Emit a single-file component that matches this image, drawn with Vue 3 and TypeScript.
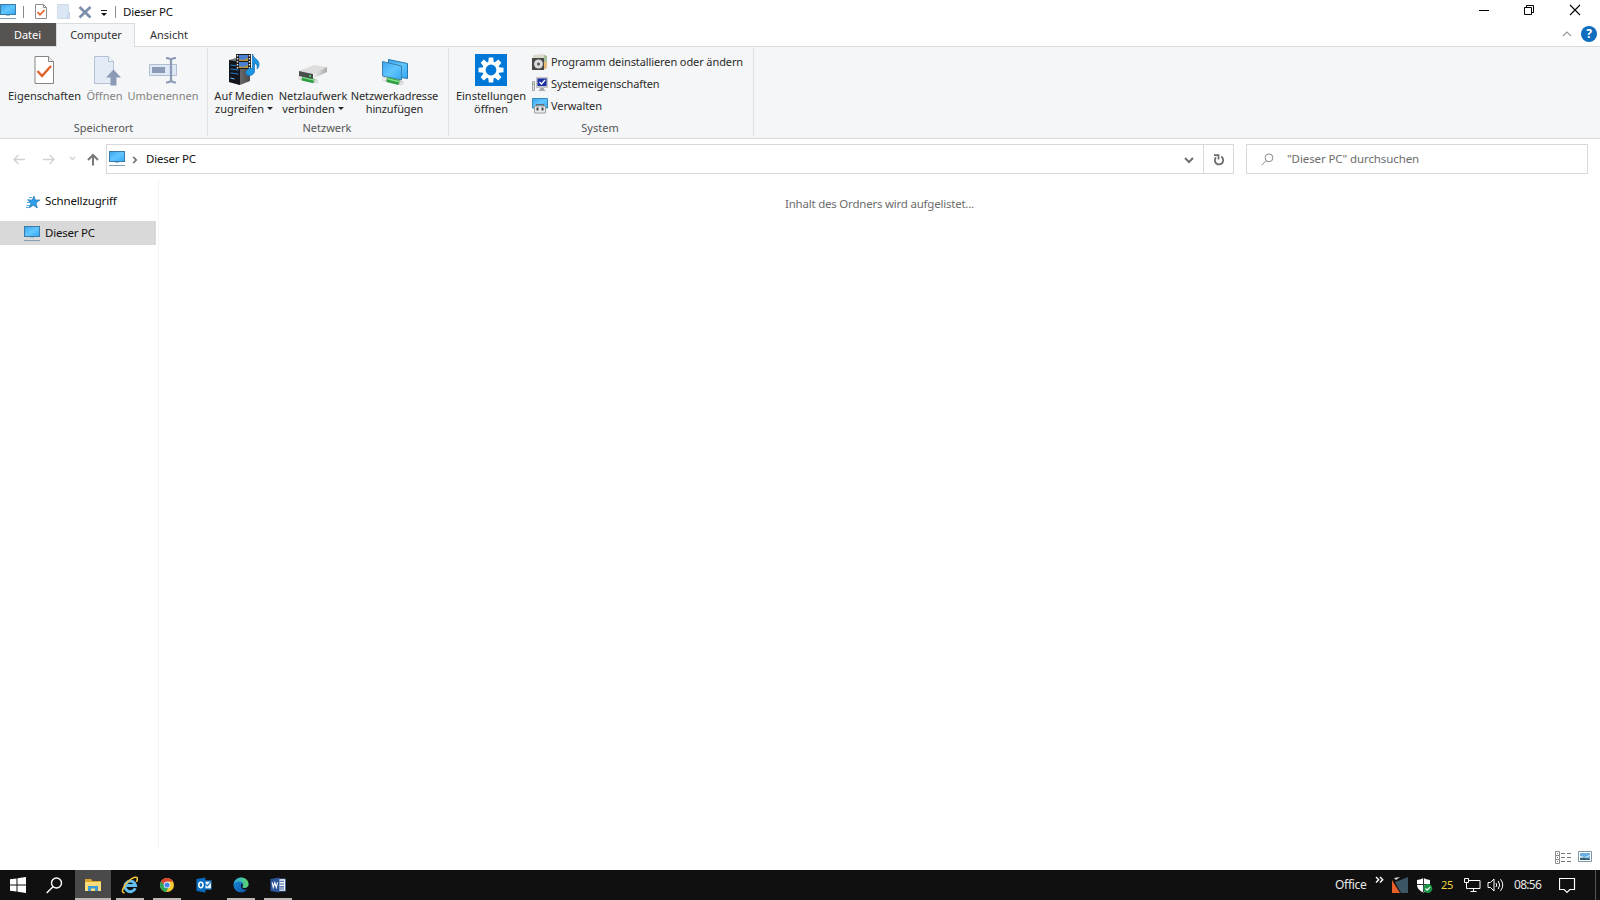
<script setup lang="ts">
import { ref } from 'vue'

type TabId = 'computer' | 'ansicht'
const activeTab = ref<TabId>('computer')
const search = ref('')
const apps = [
  { id: 'explorer', label: 'Explorer', state: 'active' },
  { id: 'ie', label: 'Internet Explorer', state: 'open' },
  { id: 'chrome', label: 'Chrome', state: 'open' },
  { id: 'outlook', label: 'Outlook', state: '' },
  { id: 'edge', label: 'Edge', state: 'open' },
  { id: 'word', label: 'Word', state: 'open' },
]
</script>

<template>
  <div class="desktop">
    <svg class="defs" width="0" height="0" aria-hidden="true">
      <defs>
        <linearGradient id="screen" x1="0" y1="0" x2="1" y2="1">
          <stop offset="0" stop-color="#3aa6ef" /><stop offset=".5" stop-color="#62c6ff" /><stop offset="1" stop-color="#35a8f5" />
        </linearGradient>
        <linearGradient id="steel" x1="0" y1="0" x2="1" y2="0">
          <stop offset="0" stop-color="#f2f2f2" /><stop offset="1" stop-color="#a9a9a9" />
        </linearGradient>
        <linearGradient id="tower" x1="0" y1="0" x2="1" y2="0">
          <stop offset="0" stop-color="#8a8a8a" /><stop offset="1" stop-color="#4a4a4a" />
        </linearGradient>
        <linearGradient id="edgeBlue" x1="0" y1="0" x2="1" y2="1">
          <stop offset="0" stop-color="#1b8fe0" /><stop offset="1" stop-color="#0b4fa0" />
        </linearGradient>
        <linearGradient id="edgeGreen" x1="0" y1="0" x2="1" y2="0">
          <stop offset="0" stop-color="#27a9e8" /><stop offset="1" stop-color="#5fd668" />
        </linearGradient>
        <symbol id="pc" viewBox="0 0 16 16">
          <rect x=".5" y=".5" width="15" height="10" fill="url(#screen)" stroke="#3c7ba6" />
          <path d="M6 11h4v1H6z" fill="#9cc3dc" /><path d="M0 14.500h16" stroke="#84a0b2" stroke-width="1" />
        </symbol>
        <symbol id="pipe" viewBox="0 0 24 10">
          <path d="M3 3l17 4" stroke="#b9bdb9" stroke-width="4" stroke-linecap="round" />
          <path d="M5.500 3.500l12 3" stroke="#2f9e42" stroke-width="5" /><path d="M6 2.700l12 3" stroke="#7fe08a" stroke-width="1.500" />
          <circle cx="3" cy="3" r="1.800" fill="#eceeec" /><circle cx="20" cy="7.300" r="1.800" fill="#dfe3df" />
        </symbol>
      </defs>
    </svg>

    <header class="titlebar">
      <svg class="app-icon" width="16" height="16"><use href="#pc" /></svg>
      <i class="sep sep-a"></i>
      <svg class="q-check" width="14" height="17" viewBox="0 0 14 17">
        <path d="M1.500 1.500h8l3 3v11h-11z" fill="#fff" stroke="#8e8e8e" /><path d="M9.500 1.500v3h3" fill="none" stroke="#8e8e8e" /><path d="M3.500 9l2.500 2.800L10.500 7" fill="none" stroke="#e2602a" stroke-width="1.700" />
      </svg>
      <svg class="q-new" width="14" height="17" viewBox="0 0 14 17">
        <path d="M.5 1.500h11v14H.5z" fill="#dbe6f4" stroke="#d0dcec" /><path d="M12.500 9.500v6h-2v-4z" fill="#dbe6f4" stroke="#c3d1e4" />
      </svg>
      <svg class="q-del" width="14" height="14" viewBox="0 0 14 14"><path d="M1.500 2l11 10.500M12.500 2l-11 10.500" stroke="#7f90ac" stroke-width="2.800" /></svg>
      <svg class="q-more" width="8" height="8" viewBox="0 0 8 8"><path d="M1 1.500h6" stroke="#111" /><path d="M1 4h6L4 7z" fill="#111" /></svg>
      <i class="sep sep-b"></i>
      <h1 class="title">Dieser PC</h1>
      <div class="win-buttons">
        <svg width="45" height="22" viewBox="0 0 45 22"><path d="M17 10.500h10" stroke="#000" /></svg>
        <svg width="45" height="22" viewBox="0 0 45 22"><path d="M17.500 7.500h7v7h-7zM19.500 7V5.500h7v7H25" fill="none" stroke="#000" /></svg>
        <svg width="46" height="22" viewBox="0 0 46 22"><path d="M18 5l10 10M28 5l-10 10" stroke="#000" stroke-width="1.100" /></svg>
      </div>
    </header>

    <nav class="tabs">
      <button class="tab file">Datei</button>
      <button class="tab computer" :class="{ active: activeTab === 'computer' }" @click="activeTab = 'computer'">Computer</button>
      <button class="tab view" :class="{ active: activeTab === 'ansicht' }" @click="activeTab = 'ansicht'">Ansicht</button>
      <svg class="collapse" width="10" height="8" viewBox="0 0 10 8"><path d="M1 6l4-4 4 4" fill="none" stroke="#999" stroke-width="1.200" /></svg>
      <span class="help">?</span>
    </nav>

    <section class="ribbon">
      <div class="group g-place">
        <div class="tools">
          <button class="tool w79">
            <svg width="32" height="32" viewBox="0 0 32 32"><path d="M6 2.500h13.500l5 5v22H6z" fill="#fff" stroke="#858585" /><path d="M19.500 2.500v5h5" fill="#eee" stroke="#858585" /><path d="M8.500 17l4.500 5 9-10" fill="none" stroke="#e2602a" stroke-width="2.400" /></svg>
            <span>Eigenschaften</span>
          </button>
          <button class="tool w41 disabled">
            <svg width="32" height="32" viewBox="0 0 32 32"><path d="M5.500 2.500h14l5 5v22h-19z" fill="#e3ebf6" stroke="#b4c1d5" /><path d="M19.500 2.500v5h5" fill="#f4f7fb" stroke="#b4c1d5" /><path d="M24.500 15.500l7.500 8h-4.500v8h-6v-8H17z" fill="#8b9bb5" /></svg>
            <span>Öffnen</span>
          </button>
          <button class="tool w76 disabled">
            <svg width="32" height="32" viewBox="0 0 32 32"><path d="M2.500 10.500h27v11h-27z" fill="#dfe8f5" stroke="#b0bfd4" /><path d="M5 13h13v6H5z" fill="#8b9bb5" /><path d="M19 4q5 0 5 3 0-3 5-3M24 6v21M19 28.500q5 0 5-3 0 3 5 3" fill="none" stroke="#8b9bb5" stroke-width="2.200" /></svg>
            <span>Umbenennen</span>
          </button>
        </div>
        <div class="caption">Speicherort</div>
      </div>

      <div class="group g-net">
        <div class="tools">
          <button class="tool w65">
            <svg width="32" height="32" viewBox="0 0 32 32">
              <path d="M1 6l10-3 11 2v22l-10 4-11-3z" fill="url(#tower)" /><path d="M1 6l11 2v23L1 28z" fill="#12161c" /><path d="M2.500 11l8 1M2.500 15l8 1M2.500 19l8 1" stroke="#2479c6" stroke-width="1.200" /><path d="M2.500 24l4 1" stroke="#6cc5ff" />
              <path d="M8 0h15v15H8z" fill="#1d1d1d" /><path d="M11 1h9v6h-9z" fill="#4a7fd0" /><path d="M11 8h9v6h-9z" fill="#4a7fd0" /><path d="M11 5l4 1 5-2v3h-9zM11 12l4 1 5-2v3h-9z" fill="#b5933f" /><path d="M9.500 1v14M21.500 1v14" stroke="#eee" stroke-width="1.400" stroke-dasharray="1.500 1.500" />
              <path d="M24.500 0c1 5 7 5 6.500 11-.2 2-1 3-2 4 1-4-1-5-2.500-6v8c0 3-3 5-6 4.500S17 18 19 16s3.500-2 5.500-1.500z" fill="#1d94e0" stroke="#0d6fb8" stroke-width=".7" />
            </svg>
            <span>Auf Medien<br />zugreifen <b class="caret"></b></span>
          </button>
          <button class="tool w74">
            <svg width="32" height="32" viewBox="0 0 32 32">
              <use href="#pipe" x="0" y="20" width="23" height="11" />
              <path d="M2 17l15-6 13 2-13 7z" fill="#dedede" /><path d="M2 17l14 3v5L2 22z" fill="#4a4f4e" /><path d="M16 20l14-7v5l-14 7z" fill="url(#steel)" /><circle cx="13" cy="22" r="1" fill="#46e45b" />
            </svg>
            <span>Netzlaufwerk<br />verbinden <b class="caret"></b></span>
          </button>
          <button class="tool w92 tight">
            <svg width="32" height="32" viewBox="0 0 32 32">
              <path d="M9.500 5.500l19 4v15l-19-3z" fill="url(#screen)" stroke="#2779ad" /><path d="M3.500 7.500l19 4.500v14l-19-4z" fill="url(#screen)" stroke="#3c81ab" />
              <use href="#pipe" x="2" y="22" width="25" height="10" />
            </svg>
            <span>Netzwerkadresse<br />hinzufügen</span>
          </button>
        </div>
        <div class="caption">Netzwerk</div>
      </div>

      <div class="group g-sys">
        <div class="tools">
          <button class="tool w77">
            <svg width="32" height="32" viewBox="0 0 32 32">
              <path d="M0 0h32v32H0z" fill="#0078d7" />
              <g fill="#fff"><path id="cog" d="M13.800 3.500h4.400l.6 5h-5.600zM13.200 23.500h5.600l-.6 5h-4.400z" /><use href="#cog" transform="rotate(45 16 16)" /><use href="#cog" transform="rotate(90 16 16)" /><use href="#cog" transform="rotate(135 16 16)" /></g>
              <circle cx="16" cy="16" r="7" fill="none" stroke="#fff" stroke-width="3.200" />
            </svg>
            <span>Einstellungen<br />öffnen</span>
          </button>
          <ul class="rows">
            <li>
              <svg width="16" height="16" viewBox="0 0 16 16"><path d="M1 1l9-1 4 1v14l-3 1H1z" fill="#dcd9cd" /><path d="M12 1l3 1v6l-3 1z" fill="#a9bf9a" /><path d="M12 8h3v6l-3 1z" fill="#e8b878" /><path d="M0 4h12v12H0z" fill="#484848" /><circle cx="6.500" cy="10" r="4.500" fill="#dadada" /><circle cx="6.500" cy="10" r="1.500" fill="#555" /></svg>
              <span>Programm deinstallieren oder ändern</span>
            </li>
            <li>
              <svg width="16" height="16" viewBox="0 0 16 16"><path d="M.5 5.500h2v9h-2z" fill="#e4e4e4" stroke="#a2a2a2" /><path d="M.5 8h2" stroke="#6cbf55" /><path d="M4 1h12v11H4z" fill="#c2c4c8" /><path d="M5.500 2.500h9v7.500h-9z" fill="#1d2fa5" /><path d="M7.500 6l2 2L13 4" fill="none" stroke="#fff" stroke-width="1.300" /><path d="M8 12h4v1.500l2 1.500H6l2-1.500z" fill="#a5a8ad" /></svg>
              <span>Systemeigenschaften</span>
            </li>
            <li>
              <svg width="16" height="16" viewBox="0 0 16 16"><path d="M.5.500h15v9.500H.5z" fill="url(#screen)" stroke="#3887b9" /><path d="M4.500 8V6.500h7V8" fill="none" stroke="#6a6a6a" stroke-width="1.200" /><path d="M2.500 8h11v7h-11z" fill="#ebebeb" stroke="#8c8c8c" stroke-width=".8" /><path d="M4.500 9.500h2v3h-2zM9.500 9.500h2v3h-2z" fill="#444" /></svg>
              <span>Verwalten</span>
            </li>
          </ul>
        </div>
        <div class="caption">System</div>
      </div>
    </section>

    <div class="address-row">
      <svg class="nav-icons" width="106" height="30" viewBox="0 0 106 30" fill="none">
        <path d="M25 15.500H14M18.500 11L14 15.500l4.500 4.500M43 15.500h11M49.500 11l4.500 4.500-4.500 4.500" stroke="#d2d2d2" stroke-width="1.400" />
        <path d="M70 13l2.500 2.500L75 13" stroke="#cfcfcf" stroke-width="1.300" />
        <path d="M93 21.500V11M88 16l5-5 5 5" stroke="#777" stroke-width="2" />
      </svg>
      <div class="path-box">
        <svg class="path-pc" width="16" height="16"><use href="#pc" /></svg>
        <svg class="crumb" width="6" height="8" viewBox="0 0 6 8"><path d="M1.200 1l3 3-3 3" fill="none" stroke="#666" stroke-width="1.600" /></svg>
        <span class="ui path-text">Dieser PC</span>
        <svg class="drop" width="10" height="8" viewBox="0 0 10 8"><path d="M1 2l4 4 4-4" fill="none" stroke="#707070" stroke-width="2" /></svg>
        <div class="reload">
          <svg width="12" height="13" viewBox="0 0 12 13"><path d="M3 4.300A4.200 4.200 0 1 0 8.200 3.600" fill="none" stroke="#6c6c6c" stroke-width="1.800" /><path d="M1 2.200h4.500V6.500" fill="none" stroke="#6c6c6c" stroke-width="1.700" /></svg>
        </div>
      </div>
      <label class="search-box">
        <svg width="13" height="13" viewBox="0 0 13 13" fill="none" stroke="#8b8b8b"><circle cx="8" cy="4.800" r="3.900" /><path d="M5.200 7.600L.6 12.200" /></svg>
        <input v-model="search" class="ui" placeholder="&quot;Dieser PC&quot; durchsuchen" />
      </label>
    </div>

    <main class="body">
      <aside class="sidebar">
        <div class="side-item">
          <svg width="16" height="16" viewBox="0 0 16 16"><path d="M10 2l1.200 3.900 4.600.2-3.800 2.800 1.300 5.100-4-2.800L5 14l1.800-4.800L4 6.300l4.200-.3z" fill="#2f9ee8" stroke="#2474b4" stroke-width=".7" /><path d="M5 3.500h3M3.500 5.500h2M3 8.500h3M2.500 11.500h3M2 13.500h2.500" stroke="#4ba9e2" /></svg>
          <span class="ui quick">Schnellzugriff</span>
        </div>
        <div class="side-item selected">
          <svg width="16" height="16"><use href="#pc" /></svg>
          <span class="ui">Dieser PC</span>
        </div>
      </aside>
      <div class="content"><p class="ui">Inhalt des Ordners wird aufgelistet...</p></div>
    </main>

    <footer class="status">
      <svg width="17" height="14" viewBox="0 0 17 14"><path d="M.5.500h4v12h-4zM.5 4.500h4M.5 8.500h4" fill="none" stroke="#8d8d8d" /><path d="M2 2.500h1M2 6.500h1M2 10.500h1M6 2.500h4M12 2.500h4M6 6.500h4M12 6.500h4M6 10.500h4M12 10.500h4" stroke="#777" /></svg>
      <svg width="15" height="12" viewBox="0 0 15 12"><path d="M.5.500h13v10H.5z" fill="#fff" stroke="#8293a0" /><path d="M2 2h10v7H2z" fill="#6caee6" /><path d="M2 5l5 1 5-2v1l-5 2-5 1z" fill="#d8edf9" /><path d="M2 7l4-.5 6 1.500v1H2z" fill="#315f74" /></svg>
    </footer>

    <div class="taskbar">
      <div class="task start"><svg width="16" height="16" viewBox="0 0 16 16"><path d="M0 2.300l6.500-.9v6.100H0zM7.500 1.200L16 0v7.500H7.500zM0 8.500h6.500v6.100L0 13.700zM7.500 8.500H16V16l-8.500-1.200z" fill="#fff" /></svg></div>
      <div class="task find"><svg width="17" height="17" viewBox="0 0 17 17" fill="none" stroke="#fff" stroke-width="1.400"><circle cx="10.500" cy="6" r="5" /><path d="M7 9.700L.7 16" /></svg></div>
      <div v-for="app in apps" :key="app.id" class="task app" :class="app.state" :title="app.label">
        <svg v-if="app.id === 'explorer'" width="16" height="16" viewBox="0 0 16 16"><path d="M0 2h6l1.500 2H16v10H0z" fill="#dea32a" /><path d="M0 5h16v9H0z" fill="#fbdc7c" /><path d="M3 14V9h10v5h-3v-2.500H6V14z" fill="#3a9bd6" /></svg>
        <svg v-else-if="app.id === 'ie'" width="18" height="18" viewBox="0 0 18 18" fill="none"><path d="M14.300 12.300A5.300 5.300 0 1 1 14.600 9.500H5" stroke="#62bdf0" stroke-width="2.900" /><path d="M3.500 16.500C-.5 18 2 10 7 5.500S17-.5 16.200 3.500c0 .9-.4 1.700-.8 2.500" stroke="#f0c33a" stroke-width="1.600" /></svg>
        <svg v-else-if="app.id === 'chrome'" width="16" height="16" viewBox="0 0 16 16"><circle cx="8" cy="8" r="7" fill="#f7c92e" /><path d="M1.900 4.500A7 7 0 0 0 7 15l3.500-6z" fill="#2aa457" /><path d="M1.900 4.500A7 7 0 0 1 14.100 4.500H8L6 9z" fill="#dc4437" /><circle cx="8" cy="8" r="3.300" fill="#fff" /><circle cx="8" cy="8" r="2.600" fill="#4384ea" /></svg>
        <svg v-else-if="app.id === 'outlook'" width="16" height="16" viewBox="0 0 17 17"><path d="M8 3.500h8.500v10H8z" fill="#1774c4" /><path d="M9 5h7v7H9z" fill="#e8f3fc" /><path d="M9.500 7l2.500 2.500L16 5" fill="none" stroke="#1774c4" stroke-width="1.300" /><path d="M.5 2L10 .5v16L.5 15z" fill="#0a6cc0" /><ellipse cx="5.200" cy="8.500" rx="2.200" ry="2.900" fill="none" stroke="#fff" stroke-width="1.600" /></svg>
        <svg v-else-if="app.id === 'edge'" width="16" height="16" viewBox="0 0 17 17"><circle cx="8.500" cy="8.500" r="8" fill="url(#edgeBlue)" /><path d="M.6 8.200C1 3.500 4.500.5 8.700.5c4.800 0 7.800 3.500 7.800 7 0 3-2 4.200-4.200 4.200-1.700 0-2.500-.8-2.500-1.400 0-.5.900-.9.900-2.300 0-1.800-1.700-3.200-4.200-3.200-2.900 0-5.200 1.500-5.900 3.400z" fill="url(#edgeGreen)" /><path d="M10.700 8c0 1.400-.9 1.800-.9 2.300 0 .6.800 1.400 2.500 1.400 1.600 0 3-.7 3.700-2l1 2.300c-1.500 1.800-4.500 2-6.500.8C8.500 11.800 8 9.500 9 7.500z" fill="#101010" /></svg>
        <svg v-else width="16" height="16" viewBox="0 0 17 17"><path d="M8 2h8.500v13H8z" fill="#fff" stroke="#2b579a" stroke-width=".7" /><path d="M10 4.500h5M10 7.500h5M10 10.500h5M10 12.800h5" stroke="#2b579a" stroke-width="1.200" /><path d="M.5 2L10 .5v16L.5 15z" fill="#2b579a" /><path d="M2.300 5.800l1.200 5.200 1.600-5 1.600 5L8 5.800" fill="none" stroke="#fff" stroke-width="1.200" /></svg>
      </div>
      <div class="tray">
        <span class="office">Office</span>
        <svg class="more" width="9" height="8" viewBox="0 0 9 8"><path d="M1 1l2.700 2.700L1 6.400M5 1l2.700 2.700L5 6.400" fill="none" stroke="#fff" stroke-width="1.400" /></svg>
        <svg class="t-app" width="16" height="16" viewBox="0 0 16 16"><path d="M0 3l3 5 5 8H0z" fill="#e85f2a" /><path d="M3 5Q9 3 16 0v16H9Q6 11 3 5z" fill="#3d5666" /><path d="M2 1l6-1-4 3z" fill="#dedede" /></svg>
        <svg class="t-shield" width="17" height="17" viewBox="0 0 17 17"><path d="M7.500 1Q10 2.700 14 3v4.500c0 4-3 6.500-6.500 8C4 14 1 11.500 1 7.500V3q4-.3 6.500-2z" fill="#fff" /><path d="M7.500 1v14M1 7.500h13" stroke="#333" /><circle cx="11.800" cy="11.500" r="4.500" fill="#189447" /><path d="M9.500 11.500l1.700 1.700 3-3.300" fill="none" stroke="#fff" stroke-width="1.200" /></svg>
        <span class="temp">25</span>
        <svg class="t-net" width="17" height="16" viewBox="0 0 17 16" fill="none" stroke="#fff"><path d="M5 3.500h11v8H4.500M9.500 12v2.500M6.500 14.500h6M.5 1.500h4v4h-4zM2.500 5.500v6h2" /></svg>
        <svg class="t-sound" width="17" height="14" viewBox="0 0 17 14" fill="none" stroke="#fff"><path d="M1 4.500h2.500L7 1v12L3.500 9.500H1zM9 5q1.500 2 0 4M11.200 3q3 4 0 8M13.500 1.200q4.500 5.800 0 11.600" /></svg>
        <time class="clock">08:56</time>
        <svg class="t-note" width="17" height="17" viewBox="0 0 17 17"><path d="M.5 1.500h15v11h-4.700L8 15.300 5.200 12.500H.5z" fill="none" stroke="#fff" stroke-width="1.200" /></svg>
        <i class="peek"></i>
      </div>
    </div>
  </div>
</template>

<style>
html, body { margin: 0; overflow: hidden; background: #fff; }
</style>

<style scoped>
* { box-sizing: border-box; }
.desktop { width: 1600px; height: 900px; display: flex; flex-direction: column; background: #fff; color: #111; font: 11.5px/16px "Noto Sans", "Open Sans", sans-serif; overflow: hidden; }
.defs { position: absolute; }
svg { display: block; flex: none; }
button { border: 0; padding: 0; background: none; font: inherit; color: inherit; }
.ui { font-size: 11.5px; letter-spacing: -.22px; white-space: nowrap; }
.quick { letter-spacing: -.15px; }

.titlebar { height: 23px; display: flex; align-items: center; flex: none; }
.app-icon { margin-top: 0; }
.sep { width: 1px; height: 12px; background: #8a8a8a; }
.sep-a { margin-left: 7px; }
.q-check { margin-left: 10px; }
.q-new { margin-left: 9px; }
.q-del { margin-left: 7px; }
.q-more { margin: 3px 0 0 8px; }
.sep-b { margin-left: 7px; }
.title { margin: 0 0 0 7px; font-size: 11.5px; font-weight: 400; letter-spacing: -.22px; }
.win-buttons { margin: 0 2px 0 auto; display: flex; align-self: flex-start; }

.tabs { height: 24px; display: flex; border-bottom: 1px solid #dadbdc; flex: none; font-size: 11px; }
.tab { height: 23px; color: #333; }
.file { width: 56px; background: #565351; color: #fff; padding-right: 1px; }
.computer { width: 79px; border: 1px solid transparent; border-bottom: 0; letter-spacing: -.08px; padding-left: 1px; }
.view { width: 68px; }
.tab.active { height: 24px; background: #f5f6f7; border: 1px solid #dadbdc; border-bottom: 0; padding-bottom: 1px; }
.collapse { margin: 7px 0 0 auto; }
.help { width: 16px; height: 16px; margin: 3px 3px 0 9px; border-radius: 50%; background: #0f6cbf; color: #fff; font-weight: 700; font-size: 12px; line-height: 16px; text-align: center; }

.ribbon { height: 92px; display: flex; background: #f5f6f7; border-bottom: 1px solid #d9dadc; flex: none; font-size: 11px; color: #2a2a2a; }
.group { height: 88px; margin-top: 1px; border-right: 1px solid #e0e1e2; display: flex; flex-direction: column; }
.g-place { width: 208px; padding-left: 5px; }
.g-net { width: 241px; padding-left: 3px; }
.g-sys { width: 305px; padding-left: 3px; }
.tools { display: flex; height: 73px; padding-top: 6px; }
.tool { display: flex; flex-direction: column; align-items: center; justify-content: flex-start; line-height: 13px; white-space: nowrap; }
.tool span { margin-top: 3px; }
.tight { letter-spacing: -.12px; padding-right: 1px; }
.disabled { color: #838383; }
.w79 { width: 79px; } .w41 { width: 41px; } .w76 { width: 76px; }
.w65 { width: 66px; } .w74 { width: 72px; } .w92 { width: 92px; } .w77 { width: 78px; }
.caret { display: inline-block; border: 3px solid transparent; border-top-color: #222; border-bottom: 0; vertical-align: 3px; }
.caption { text-align: center; line-height: 16px; color: #555; margin-top: 3px; }
.g-place .caption { margin-left: -5px; } .g-net .caption, .g-sys .caption { margin-left: -5px; }
.rows { list-style: none; margin: -3px 0 0 2px; padding: 0; letter-spacing: -.1px; }
.rows li { display: flex; align-items: center; height: 22px; gap: 3px; white-space: nowrap; }

.address-row { height: 41px; display: flex; padding-top: 5px; flex: none; }
.path-box { width: 1128px; height: 30px; border: 1px solid #d9d9d9; display: flex; align-items: center; }
.path-pc { margin: 0 0 0 2px; }
.crumb { margin: 1px 0 0 7px; }
.path-text { margin-left: 8px; }
.drop { margin: 1px 9px 0 auto; }
.reload { width: 30px; height: 28px; border-left: 1px solid #d9d9d9; display: flex; align-items: center; justify-content: center; }
.search-box { width: 342px; height: 30px; margin-left: 12px; border: 1px solid #d9d9d9; display: flex; align-items: center; padding-left: 14px; gap: 13px; }
.search-box input { border: 0; outline: 0; padding: 0 0 2px; width: 260px; font-family: inherit; color: #6d6d6d; letter-spacing: -.1px; }
.search-box input::placeholder { color: #6d6d6d; opacity: 1; }

.body { flex: 1; display: flex; min-height: 0; }
.sidebar { width: 159px; border-right: 1px solid #f4f4f4; padding-top: 9px; }
.side-item { width: 156px; height: 24px; display: flex; align-items: center; gap: 5px; padding-left: 24px; margin-bottom: 8px; }
.side-item svg { margin-top: 1px; }
.selected { background: #d9d9d9; }
.content { flex: 1; text-align: center; }
.content p { margin: 16px 0 0; color: #6d6d6d; }

.status { height: 21px; flex: none; display: flex; justify-content: flex-end; gap: 6px; padding: 2px 7px 0 0; }

.taskbar { height: 30px; flex: none; background: #101010; display: flex; color: #fff; }
.task { width: 37px; height: 30px; display: flex; align-items: center; justify-content: center; position: relative; }
.app { padding-right: 1px; }
.start { width: 36px; } .find { width: 39px; padding-right: 3px; }
.task.active { background: #4a4a4a; width: 36px; margin-right: 1px; padding-right: 0; }
.task.open::after, .task.active::after { content: ""; position: absolute; left: 4px; right: 5px; bottom: 0; height: 2px; background: #bcb8b5; }
.task.active::after { left: 0; right: 0; }
.tray { margin-left: auto; display: flex; align-items: center; font-size: 12px; color: #e8e8e8; }
.office { width: 33px; letter-spacing: -.3px; }
.more { margin: -11px 0 0 7px; }
.t-app { margin-left: 8px; }
.t-shield { margin-left: 8px; }
.temp { margin-left: 8px; width: 14px; color: #f1d33c; font-size: 11px; letter-spacing: -.4px; }
.t-net { margin-left: 9px; }
.t-sound { margin-left: 6px; }
.clock { margin-left: 10px; width: 29px; letter-spacing: -.7px; }
.t-note { margin-left: 16px; }
.peek { width: 1px; height: 30px; background: #555; margin: 0 4px 0 19px; }
</style>
